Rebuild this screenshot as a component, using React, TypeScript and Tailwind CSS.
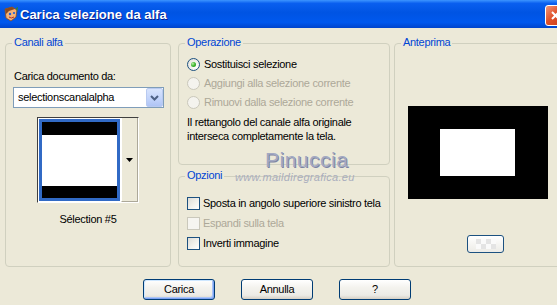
import React from "react";

const Legend = ({ children }: { children: React.ReactNode }) => (
  <div className="absolute -top-[8px] left-[6px] px-[2px] bg-[#ECE9D8] text-[#0046D5] leading-[13px]">
    {children}
  </div>
);

const Radio = ({ checked, disabled }: { checked?: boolean; disabled?: boolean }) => (
  <div
    className={
      "w-[13px] h-[13px] rounded-full border flex items-center justify-center shrink-0 " +
      (disabled
        ? "border-[#CAC8BB] bg-[#F4F3EE]"
        : "border-[#1C5180] bg-[radial-gradient(circle_at_70%_70%,#FFFFFF_0%,#F0EFEA_50%,#DCDCD7_100%)]")
    }
  >
    {checked && (
      <div className="w-[5px] h-[5px] rounded-full bg-[radial-gradient(circle_at_35%_35%,#B8EFA8_0%,#3DB42E_50%,#1E8A18_100%)]" />
    )}
  </div>
);

const Check = ({ disabled }: { disabled?: boolean }) => (
  <div
    className={
      "w-[13px] h-[13px] border shrink-0 " +
      (disabled
        ? "border-[#CAC8BB] bg-[#F6F5F0]"
        : "border-[#1C5180] bg-[linear-gradient(135deg,#DCDCD7_0%,#F0EFEA_50%,#FFFFFF_100%)]")
    }
  />
);

const XPButton = ({ label, def }: { label: string; def?: boolean }) => (
  <div
    className={
      "w-[72px] h-[21px] rounded-[3px] border border-[#003C74] flex items-center justify-center bg-[linear-gradient(to_bottom,#FFFFFF_0%,#F4F3EE_40%,#ECEBE6_80%,#D6D0C5_100%)] " +
      (def ? "shadow-[inset_-1px_-1px_0_#7DA2F2,inset_1px_1px_0_#CEE7FF,inset_-2px_-2px_0_#A9C4F7]" : "")
    }
  >
    {label}
  </div>
);

export default function App() {
  return (
    <div className="relative w-[557px] h-[305px] overflow-hidden bg-[#ECE9D8] text-black text-[11px] leading-[13px] tracking-[-0.3px] font-['Liberation_Sans',Arial,sans-serif]">
      {/* Title bar */}
      <div className="h-[28px] flex items-center overflow-hidden bg-[linear-gradient(to_bottom,#3D95FF_0%,#0A5FEF_12%,#0054E3_45%,#0058EE_80%,#0044CC_100%)]">
        <div className="ml-[3px] w-[16px] h-[16px] shrink-0">
          <svg width="16" height="16" viewBox="0 0 16 16">
            <path d="M2 3 L9 1 L14 4 L13 11 L8 15 L3 12 Z" fill="#F2B27A" stroke="#8A4A1E" strokeWidth="0.8" />
            <path d="M2 3 L9 1 L12 3 L6 5 L3 8 Z" fill="#8A4A1E" />
            <circle cx="7" cy="8" r="1.2" fill="#1D5FD6" />
            <circle cx="11" cy="7" r="1.1" fill="#1D5FD6" />
            <path d="M6 11 Q8 13 11 11" stroke="#B0302A" strokeWidth="1" fill="none" />
            <path d="M13 2 L15 1 L14 6 Z" fill="#2E8B2E" />
          </svg>
        </div>
        <div className="ml-[1px] text-white font-bold text-[13px] tracking-normal [text-shadow:1px_1px_0_#0A1F8A]">
          Carica selezione da alfa
        </div>
        <div className="ml-auto -mr-[9px] mt-[2px] w-[21px] h-[21px] rounded-[3px] border border-white bg-[linear-gradient(135deg,#F0977A_0%,#E0522B_45%,#C63A16_100%)] flex items-center justify-center shrink-0">
          <svg width="11" height="11" viewBox="0 0 11 11">
            <path d="M2 2 L9 9 M9 2 L2 9" stroke="white" strokeWidth="2" />
          </svg>
        </div>
      </div>

      {/* Groups */}
      <div className="flex pl-[5px] pt-[15px]">
        {/* Canali alfa */}
        <div className="relative w-[166px] h-[224px] border border-[#D0D0BF] rounded-[4px] shrink-0">
          <Legend>Canali alfa</Legend>
          <div className="pl-[8px] pt-[26px]">Carica documento da:</div>
          <div className="ml-[7px] mt-[4px] w-[151px] h-[21px] border border-[#7F9DB9] bg-white flex items-center">
            <div className="pl-[4px] flex-1">selectionscanalalpha</div>
            <div className="w-[17px] h-[19px] mr-0 rounded-[2px] border border-[#B9CAF0] bg-[linear-gradient(to_bottom,#D8E4FD_0%,#C1D3FB_60%,#AFC4F5_100%)] flex items-center justify-center">
              <svg width="9" height="6" viewBox="0 0 9 6">
                <path d="M1 1 L4.5 4.5 L8 1" stroke="#4D6185" strokeWidth="2" fill="none" />
              </svg>
            </div>
          </div>
          <div className="mx-auto mt-[9px] w-[102px] h-[86px] flex border-t border-l border-t-[#404040] border-l-[#404040] border-b border-r border-b-white border-r-white bg-white">
            <div className="w-[83px] p-[1px]">
              <div className="h-full border-[3px] border-[#316AC5] flex flex-col">
                <div className="h-[13px] bg-black" />
                <div className="flex-1 bg-white" />
                <div className="h-[12px] bg-black" />
              </div>
            </div>
            <div className="flex-1 bg-[#ECE9D8] border-l border-l-white border-r border-b border-r-[#ACA899] border-b-[#ACA899] flex items-center justify-center">
              <svg width="7" height="4" viewBox="0 0 7 4">
                <path d="M0 0 L7 0 L3.5 4 Z" fill="black" />
              </svg>
            </div>
          </div>
          <div className="mt-[10px] text-center">Sélection #5</div>
        </div>

        {/* Middle column */}
        <div className="ml-[7px] w-[212px] flex flex-col gap-[11px] shrink-0">
          <div className="relative h-[122px] border border-[#D0D0BF] rounded-[4px]">
            <Legend>Operazione</Legend>
            <div className="pl-[8px] pt-[11px]">
              <div className="h-[19px] flex items-center gap-[4px]">
                <Radio checked />
                <span>Sostituisci selezione</span>
              </div>
              <div className="h-[19px] flex items-center gap-[4px] text-[#ACA899]">
                <Radio disabled />
                <span>Aggiungi alla selezione corrente</span>
              </div>
              <div className="h-[19px] flex items-center gap-[4px] text-[#ACA899]">
                <Radio disabled />
                <span>Rimuovi dalla selezione corrente</span>
              </div>
              <div className="mt-[3px] leading-[14px]">
                Il rettangolo del canale alfa originale
                <br />
                interseca completamente la tela.
              </div>
            </div>
          </div>
          <div className="relative h-[91px] border border-[#D0D0BF] rounded-[4px]">
            <Legend>Opzioni</Legend>
            <div className="pl-[8px] pt-[16px]">
              <div className="h-[20px] flex items-center gap-[3px]">
                <Check />
                <span>Sposta in angolo superiore sinistro tela</span>
              </div>
              <div className="h-[20px] flex items-center gap-[3px] text-[#ACA899]">
                <Check disabled />
                <span>Espandi sulla tela</span>
              </div>
              <div className="h-[20px] flex items-center gap-[3px]">
                <Check />
                <span>Inverti immagine</span>
              </div>
            </div>
          </div>
        </div>

        {/* Anteprima */}
        <div className="relative ml-[4px] w-[180px] h-[224px] border border-[#D0D0BF] rounded-[4px] shrink-0">
          <Legend>Anteprima</Legend>
          <div className="ml-[13px] mt-[62px] w-[140px] h-[93px] bg-black pl-[32px] pt-[23px]">
            <div className="w-[75px] h-[47px] bg-white" />
          </div>
          <div className="ml-[72px] mt-[36px] w-[37px] h-[18px] rounded-[3px] border border-[#1C5180] bg-[linear-gradient(to_bottom,#FFFFFF,#ECEBE6)] flex items-center justify-center">
            <div className="grid grid-cols-4 w-[20px] h-[10px]">
              <div className="bg-[#E4E4E4]" />
              <div className="bg-[#FAFAFA]" />
              <div className="bg-[#E4E4E4]" />
              <div className="bg-[#FAFAFA]" />
              <div className="bg-[#FAFAFA]" />
              <div className="bg-[#E4E4E4]" />
              <div className="bg-[#FAFAFA]" />
              <div className="bg-[#E4E4E4]" />
            </div>
          </div>
        </div>
      </div>

      {/* Buttons */}
      <div className="flex pl-[143px] mt-[12px] gap-[26px]">
        <XPButton label="Carica" def />
        <XPButton label="Annulla" />
        <XPButton label="?" />
      </div>

      {/* Watermark */}
      <div className="absolute left-[265px] top-[149px] text-[21px] leading-[21px] tracking-[0.5px] text-[#A3A9C2] [text-shadow:1px_1px_0_#7D84A3]">
        Pinuccia
      </div>
      <div className="absolute left-[235px] top-[171px] text-[11px] leading-[13px] tracking-[0.3px] italic text-[#A9ADBD]">
        www.maildiregrafica.eu
      </div>
    </div>
  );
}
